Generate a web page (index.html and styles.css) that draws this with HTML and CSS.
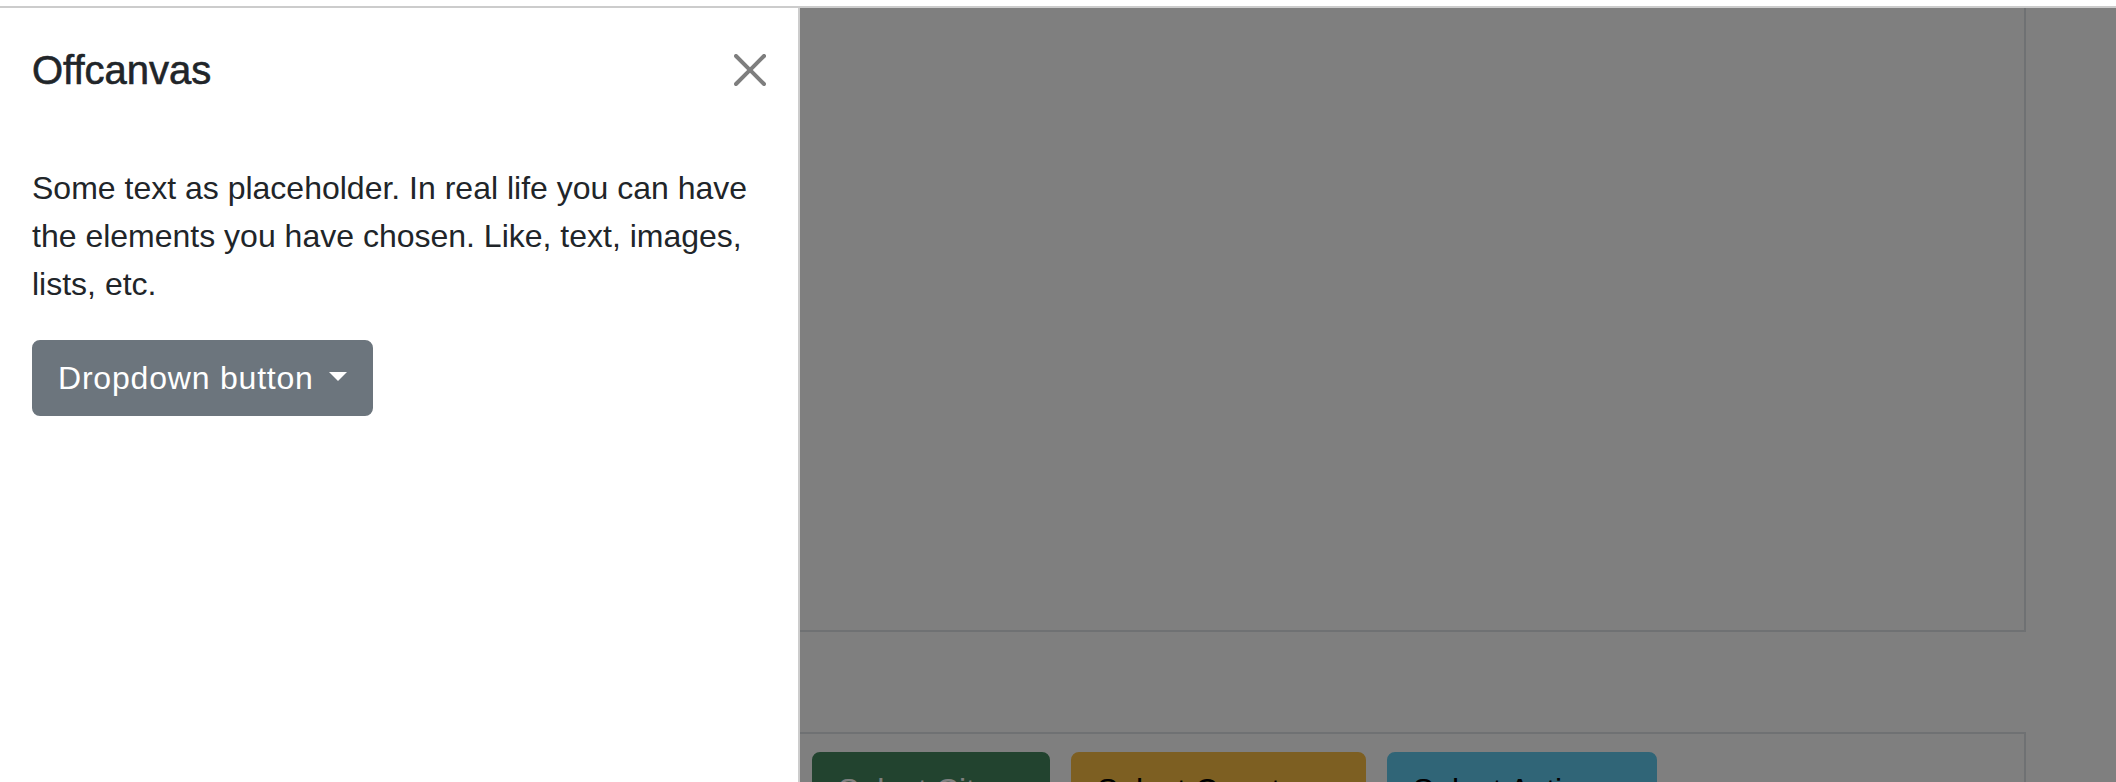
FILE: index.html
```html
<!DOCTYPE html>
<html lang="en">
<head>
<meta charset="utf-8">
<title>Offcanvas</title>
<link rel="stylesheet" href="styles.css">
</head>
<body>
  <div class="topbar"></div>
  <div class="viewport">
    <main class="page">
      <section class="box box-top"></section>
      <section class="box box-buttons">
        <button class="btn btn-success dropdown-toggle" type="button">Select City</button>
        <button class="btn btn-warning dropdown-toggle" type="button">Select Country</button>
        <button class="btn btn-info dropdown-toggle" type="button">Select Action</button>
      </section>
    </main>
    <div class="backdrop"></div>
    <aside class="offcanvas">
      <div class="offcanvas-header">
        <h5 class="offcanvas-title">Offcanvas</h5>
        <button class="btn-close" type="button" aria-label="Close">
          <svg viewBox="0 0 16 16" width="32" height="32" aria-hidden="true"><path fill="#000" d="M.293.293a1 1 0 0 1 1.414 0L8 6.586 14.293.293a1 1 0 1 1 1.414 1.414L9.414 8l6.293 6.293a1 1 0 0 1-1.414 1.414L8 9.414l-6.293 6.293a1 1 0 0 1-1.414-1.414L6.586 8 .293 1.707a1 1 0 0 1 0-1.414z"/></svg>
        </button>
      </div>
      <div class="offcanvas-body">
        <p class="lead-text">Some text as placeholder. In real life you can have the elements you have chosen. Like, text, images, lists, etc.</p>
        <button class="btn btn-secondary dropdown-toggle" type="button">Dropdown button</button>
      </div>
    </aside>
  </div>
</body>
</html>
```
FILE: styles.css
```css
* { box-sizing: border-box; }

html, body {
  margin: 0;
  padding: 0;
  background: #fff;
  width: 2116px;
  height: 782px;
  overflow: hidden;
  font-family: "Liberation Sans", Arial, sans-serif;
  color: #212529;
}

.topbar {
  height: 8px;
  background: #fff;
  border-bottom: 2px solid #cccccc;
}

.viewport {
  position: relative;
  height: 774px;
  overflow: hidden;
  background: #fff;
}

.page {
  display: flex;
  flex-direction: column;
  padding: 0 90px 0 790px;
}

.box {
  border: 2px solid #dee2e6;
}

.box-top {
  border-top-width: 0;
  height: 624px;
}

.box-buttons {
  margin-top: 100px;
  display: flex;
  gap: 21px;
  padding: 18px 20px;
  align-items: flex-start;
}

.btn {
  display: inline-block;
  font-family: "Liberation Sans", Arial, sans-serif;
  font-size: 32px;
  line-height: 48px;
  font-weight: 400;
  letter-spacing: 0.8px;
  padding: 12px 24px;
  border: 2px solid transparent;
  border-radius: 8px;
  white-space: nowrap;
  cursor: pointer;
}

.box-buttons .btn { letter-spacing: 0; }

.btn-secondary { background: #6c757d; border-color: #6c757d; color: #fff; }
.btn-success { background: #44865e; border-color: #44865e; color: #fff; }
.btn-warning { background: #fabe44; border-color: #fabe44; color: #000; }
.btn-info { background: #60caee; border-color: #60caee; color: #000; }

.dropdown-toggle::after {
  content: "";
  display: inline-block;
  margin-left: 15px;
  vertical-align: 8.16px;
  border-top: 9.6px solid;
  border-right: 9.6px solid transparent;
  border-bottom: 0;
  border-left: 9.6px solid transparent;
}

.backdrop {
  position: absolute;
  inset: 0;
  background: rgba(0, 0, 0, 0.5);
}

.offcanvas {
  position: absolute;
  top: 0;
  left: 0;
  bottom: 0;
  width: 800px;
  background: #fff;
  border-right: 2px solid rgba(0, 0, 0, 0.2);
  display: flex;
  flex-direction: column;
}

.offcanvas-header {
  display: flex;
  align-items: center;
  justify-content: space-between;
  padding: 32px;
}

.offcanvas-title {
  margin: 0;
  font-size: 40px;
  line-height: 60px;
  font-weight: 500;
  -webkit-text-stroke: 0.6px currentColor;
}

.btn-close {
  box-sizing: content-box;
  width: 32px;
  height: 32px;
  padding: 16px;
  margin: -16px -16px -16px auto;
  border: 0;
  background: transparent;
  opacity: 0.5;
  display: flex;
  align-items: center;
  justify-content: center;
  cursor: pointer;
}

.btn-close svg { display: block; }

.offcanvas-body {
  flex-grow: 1;
  padding: 32px;
}

.lead-text {
  margin: 0 0 32px;
  font-size: 32px;
  line-height: 48px;
}
```
